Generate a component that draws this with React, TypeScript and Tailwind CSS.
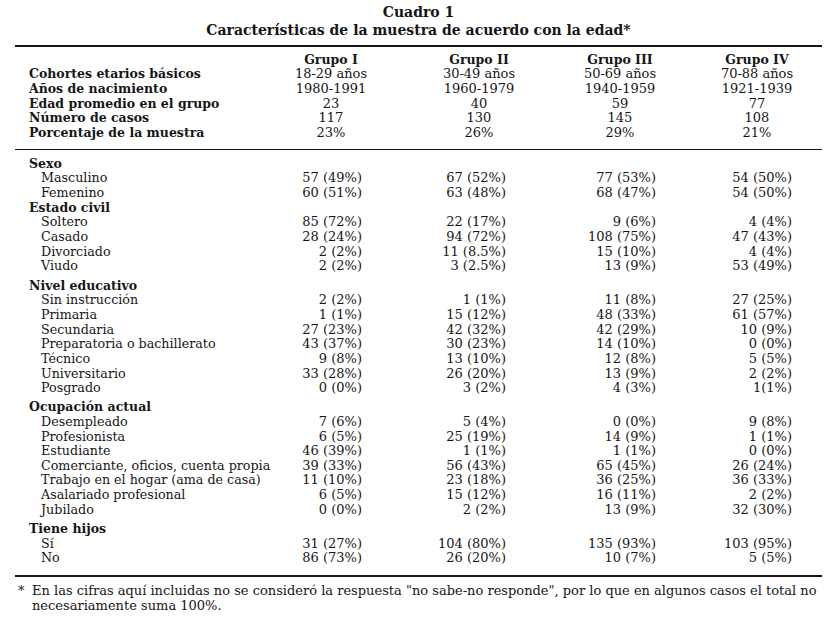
import React from 'react'

const groups = ['Grupo I', 'Grupo II', 'Grupo III', 'Grupo IV']

const profile: [string, string[]][] = [
  ['Cohortes etarios básicos', ['18-29 años', '30-49 años', '50-69 años', '70-88 años']],
  ['Años de nacimiento', ['1980-1991', '1960-1979', '1940-1959', '1921-1939']],
  ['Edad promedio en el grupo', ['23', '40', '59', '77']],
  ['Número de casos', ['117', '130', '145', '108']],
  ['Porcentaje de la muestra', ['23%', '26%', '29%', '21%']],
]

type Section = { title: string; gap: string; rows: [string, string[]][] }

const sections: Section[] = [
  {
    title: 'Sexo',
    gap: '',
    rows: [
      ['Masculino', ['57 (49%)', '67 (52%)', '77 (53%)', '54 (50%)']],
      ['Femenino', ['60 (51%)', '63 (48%)', '68 (47%)', '54 (50%)']],
    ],
  },
  {
    title: 'Estado civil',
    gap: '',
    rows: [
      ['Soltero', ['85 (72%)', '22 (17%)', '9 (6%)', '4 (4%)']],
      ['Casado', ['28 (24%)', '94 (72%)', '108 (75%)', '47 (43%)']],
      ['Divorciado', ['2 (2%)', '11 (8.5%)', '15 (10%)', '4 (4%)']],
      ['Viudo', ['2 (2%)', '3 (2.5%)', '13 (9%)', '53 (49%)']],
    ],
  },
  {
    title: 'Nivel educativo',
    gap: 'mt-[4.8px]',
    rows: [
      ['Sin instrucción', ['2 (2%)', '1 (1%)', '11 (8%)', '27 (25%)']],
      ['Primaria', ['1 (1%)', '15 (12%)', '48 (33%)', '61 (57%)']],
      ['Secundaria', ['27 (23%)', '42 (32%)', '42 (29%)', '10 (9%)']],
      ['Preparatoria o bachillerato', ['43 (37%)', '30 (23%)', '14 (10%)', '0 (0%)']],
      ['Técnico', ['9 (8%)', '13 (10%)', '12 (8%)', '5 (5%)']],
      ['Universitario', ['33 (28%)', '26 (20%)', '13 (9%)', '2 (2%)']],
      ['Posgrado', ['0 (0%)', '3 (2%)', '4 (3%)', '1(1%)']],
    ],
  },
  {
    title: 'Ocupación actual',
    gap: 'mt-[4.2px]',
    rows: [
      ['Desempleado', ['7 (6%)', '5 (4%)', '0 (0%)', '9 (8%)']],
      ['Profesionista', ['6 (5%)', '25 (19%)', '14 (9%)', '1 (1%)']],
      ['Estudiante', ['46 (39%)', '1 (1%)', '1 (1%)', '0 (0%)']],
      ['Comerciante, oficios, cuenta propia', ['39 (33%)', '56 (43%)', '65 (45%)', '26 (24%)']],
      ['Trabajo en el hogar (ama de casa)', ['11 (10%)', '23 (18%)', '36 (25%)', '36 (33%)']],
      ['Asalariado profesional', ['6 (5%)', '15 (12%)', '16 (11%)', '2 (2%)']],
      ['Jubilado', ['0 (0%)', '2 (2%)', '13 (9%)', '32 (30%)']],
    ],
  },
  {
    title: 'Tiene hijos',
    gap: 'mt-[4.6px]',
    rows: [
      ['Sí', ['31 (27%)', '104 (80%)', '135 (93%)', '103 (95%)']],
      ['No', ['86 (73%)', '26 (20%)', '10 (7%)', '5 (5%)']],
    ],
  },
]

// header cells are centred on the group, numbers sit flush right
const centerCls = ['', 'pl-[28px]', 'pl-[21px]', 'pl-[17px]']
const rightCls = ['pr-[29px]', 'pr-[33px]', 'pr-[24px]', 'pr-[25px]']

const grid = 'grid grid-cols-[256px_120px_148px_141px_137px] leading-[14.65px] whitespace-nowrap'

function App() {
  return (
    <div className="min-h-[622px] w-[839px] bg-white pt-[3px] text-[13px] text-[#161616] [font-family:'DejaVu_Serif',serif]">
      <div className="ml-[15px] w-[807px]">
        <div className="text-center text-[14px] font-bold leading-[18px]">
          <p>Cuadro 1</p>
          <p>Características de la muestra de acuerdo con la edad*</p>
        </div>

        <div className="mt-[6px] h-[2px] bg-[#161616]" />

        <div className={grid + ' mt-[5.7px]'}>
          <div />
          {groups.map((g, i) => (
            <div key={g} className={'text-center text-[12.5px] font-bold ' + centerCls[i]}>{g}</div>
          ))}
          {profile.map(([label, vals]) => (
            <React.Fragment key={label}>
              <div className="pl-[14px] text-[12.5px] font-bold">{label}</div>
              {vals.map((v, i) => (
                <div key={i} className={'text-center ' + centerCls[i]}>{v}</div>
              ))}
            </React.Fragment>
          ))}
        </div>

        <div className="mt-[8.4px] h-px bg-[#161616]" />

        <div className="mt-[6.7px]">
          {sections.map((s) => (
            <div key={s.title} className={s.gap}>
              <div className={grid}>
                <div className="col-span-5 pl-[14px] text-[12.5px] font-bold">{s.title}</div>
                {s.rows.map(([label, vals]) => (
                  <React.Fragment key={label}>
                    <div className="pl-[26px] text-[12.7px]">{label}</div>
                    {vals.map((v, i) => (
                      <div key={i} className={'text-right ' + rightCls[i]}>{v}</div>
                    ))}
                  </React.Fragment>
                ))}
              </div>
            </div>
          ))}
        </div>

        <div className="mt-[9px] h-[2px] bg-[#161616]" />

        <div className="mt-[7px] flex w-[815px] leading-[14.65px]">
          <span className="w-[17px] shrink-0 pl-[3px]">*</span>
          <p>
            En las cifras aquí incluidas no se consideró la respuesta "no sabe-no responde", por lo que en algunos casos el total no necesariamente suma 100%.
          </p>
        </div>
      </div>
    </div>
  )
}

export default App
